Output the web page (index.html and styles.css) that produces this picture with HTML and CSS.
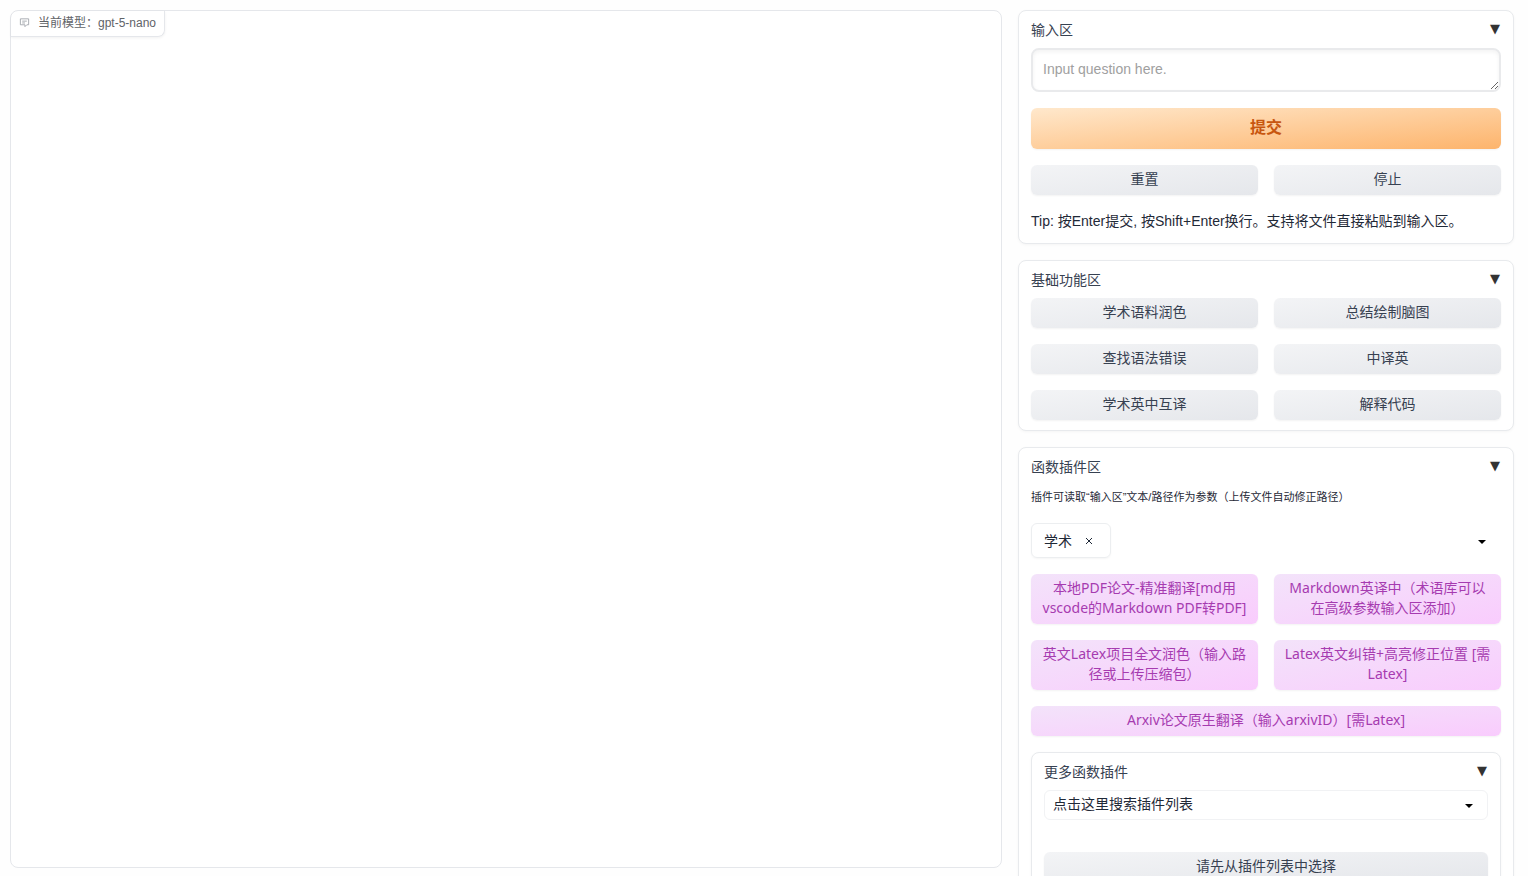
FILE: index.html
```html
<!doctype html>
<html lang="zh">
<head>
<meta charset="UTF-8">
<meta name="viewport" content="width=device-width,initial-scale=1">
<title>GPT 学术优化</title>
<link rel="stylesheet" href="styles.css">
</head>
<body>

<!-- ======================== 对话区 ======================== -->
<main class="chatbot">
  <div class="chat-label">
    <svg class="chat-icon" viewBox="0 0 24 24" fill="none" stroke="currentColor" stroke-width="2" aria-hidden="true">
      <path d="M3 4h18v13h-4l-4 4v-4H3z"/><path d="M7 9h10M7 13h6"/>
    </svg>
    <span>当前模型：gpt-5-nano</span>
  </div>
</main>

<!-- ======================== 右侧面板 ====================== -->
<aside class="side">

  <section class="panel">
    <button class="panel-head"><span>输入区</span><span class="arrow">▼</span></button>
    <div class="stack">
      <textarea class="question" rows="1" aria-label="输入区" placeholder="Input question here."></textarea>
      <button class="btn primary">提交</button>
      <div class="grid">
        <button class="btn">重置</button>
        <button class="btn">停止</button>
      </div>
      <p class="tip">Tip: 按Enter提交, 按Shift+Enter换行。支持将文件直接粘贴到输入区。</p>
    </div>
  </section>

  <section class="panel">
    <button class="panel-head"><span>基础功能区</span><span class="arrow">▼</span></button>
    <div class="grid">
      <button class="btn">学术语料润色</button>
      <button class="btn">总结绘制脑图</button>
      <button class="btn">查找语法错误</button>
      <button class="btn">中译英</button>
      <button class="btn">学术英中互译</button>
      <button class="btn">解释代码</button>
    </div>
  </section>

  <section class="panel">
    <button class="panel-head"><span>函数插件区</span><span class="arrow">▼</span></button>
    <div class="stack">
      <p class="note">插件可读取“输入区”文本/路径作为参数（上传文件自动修正路径）</p>
      <div class="group-select">
        <span class="token">学术 <button class="token-remove" aria-label="移除 学术">
          <svg viewBox="0 0 8 8" stroke="currentColor" aria-hidden="true"><path d="M1 1l6 6M7 1l-6 6"/></svg>
        </button></span>
        <div class="select">
          <select aria-label="插件分组"><option></option></select>
          <svg class="caret" viewBox="0 0 8 4" aria-hidden="true"><path d="M0 0h8l-4 4z"/></svg>
        </div>
      </div>
      <div class="grid">
        <button class="btn plugin">本地PDF论文-精准翻译[md用vscode的Markdown PDF转PDF]</button>
        <button class="btn plugin">Markdown英译中（术语库可以在高级参数输入区添加）</button>
        <button class="btn plugin">英文Latex项目全文润色（输入路径或上传压缩包）</button>
        <button class="btn plugin">Latex英文纠错+高亮修正位置 [需Latex]</button>
        <button class="btn plugin wide">Arxiv论文原生翻译（输入arxivID）[需Latex]</button>
      </div>

      <section class="panel">
        <button class="panel-head"><span>更多函数插件</span><span class="arrow">▼</span></button>
        <div class="more">
          <div class="select boxed">
            <select aria-label="插件列表"><option>点击这里搜索插件列表</option></select>
            <svg class="caret" viewBox="0 0 8 4" aria-hidden="true"><path d="M0 0h8l-4 4z"/></svg>
          </div>
          <button class="btn">请先从插件列表中选择</button>
        </div>
      </section>
    </div>
  </section>

</aside>
</body>
</html>
```
FILE: styles.css
```css
*{box-sizing:border-box}
html{scrollbar-width:none}
body{
  margin:0;padding:10px 14px 0 10px;
  display:grid;grid-template-columns:2fr 1fr;gap:16px;align-items:start;
  background:#fefefe;color:#1f2937;
  font:14px/20px "Liberation Sans","Noto Sans CJK SC",sans-serif}
p{margin:0}
button,select,textarea{font:inherit;color:inherit;margin:0}
button{cursor:pointer}

/* ---- 对话区 ---- */
.chatbot{
  height:calc(100vh - 18px);
  border:1px solid #e5e7eb;border-radius:8px;background:#fff}
.chat-label{
  display:inline-flex;align-items:center;gap:8px;
  height:26px;padding:0 8px 2px;
  border:1px solid #e5e7eb;border-width:0 1px 1px 0;border-radius:7px 0 7px 0;
  box-shadow:0 1px 3px rgba(0,0,0,.06);
  font-size:12px;color:#5f6368}
.chat-icon{width:11px;height:11px;color:#a3a7ad}

/* ---- 面板 ---- */
.side{display:grid;gap:16px;min-width:0}
.panel{
  padding:9px 12px 10px;
  border:1px solid #e8eaed;border-radius:8px;background:#fff;
  box-shadow:0 1px 3px rgba(0,0,0,.04);min-width:0}
.panel-head{
  display:flex;justify-content:space-between;width:100%;
  margin-bottom:8px;padding:0 1px 0 0;border:0;background:none;color:#374151}
.arrow{font-family:"DejaVu Sans",sans-serif;font-size:13px;line-height:18px;color:#333}
.stack{display:flex;flex-direction:column;gap:16px}
.grid{display:grid;grid-template-columns:1fr 1fr;gap:16px}

/* ---- 输入区 ---- */
.question{
  display:block;width:100%;height:44px;padding:9px 10px;resize:vertical;
  border:2px solid #e9eaec;border-radius:8px;background:#fff;
  box-shadow:inset 0 2px 4px rgba(0,0,0,.05);outline:none}
.question::placeholder{color:#a0a0a0}
.tip{margin-bottom:2px}

/* ---- 按钮 ---- */
.btn{
  display:block;width:100%;min-height:30px;padding:4px 9px 6px;
  border:0;border-radius:6px;color:#374151;
  background:linear-gradient(to bottom right,#f3f4f6,#e5e7eb);
  box-shadow:0 1px 2px rgba(0,0,0,.05)}
.primary{
  min-height:41px;font-size:16px;font-weight:bold;color:#c8560f;
  background:linear-gradient(to bottom right,#ffe8cc,#fdb46c)}
.plugin{
  font-family:"Noto Sans","Noto Sans CJK SC",sans-serif;color:#a63bb0;
  background:linear-gradient(to bottom right,#f3e3fa,#f9ccfd)}
.wide{grid-column:1/-1}

/* ---- 函数插件区 ---- */
.note{padding-top:2px;font-size:11px;line-height:20px}
.group-select{display:flex;align-items:center;gap:8px;height:35px}
.token{
  display:flex;align-items:center;gap:8px;height:35px;padding:0 12px;
  border:1px solid #eceef0;border-radius:6px;
  box-shadow:0 1px 2px rgba(0,0,0,.04)}
.token-remove{display:flex;justify-content:center;width:18px;padding:0;border:0;background:none}
.token-remove svg{width:8px;height:8px}
.select{position:relative;flex:1}
.select select{
  display:block;width:100%;height:30px;padding:0 24px 2px 8px;
  appearance:none;border:0;background:none}
.boxed select{border:1px solid #f1f2f4;border-radius:6px}
.caret{position:absolute;right:15px;top:14px;width:8px;height:4px;pointer-events:none}
.more{display:flex;flex-direction:column;gap:32px}
```
